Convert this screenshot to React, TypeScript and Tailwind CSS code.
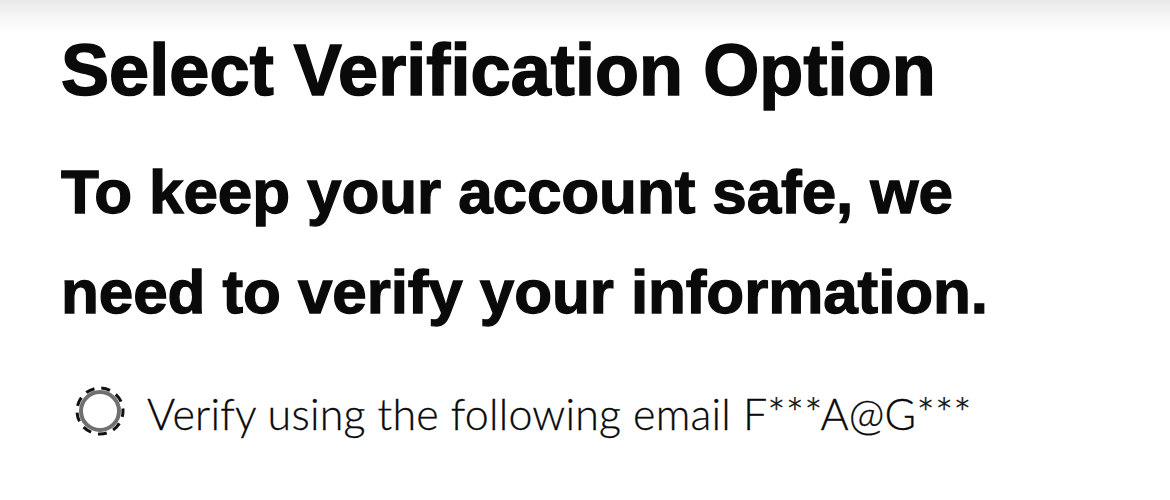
import React from "react";

function RadioMark() {
  return (
    <svg width="50" height="50" viewBox="0 0 50 50" className="shrink-0" aria-hidden>
      <circle cx="25" cy="25" r="19" fill="none" stroke="#707070" strokeWidth="4" />
      <circle
        cx="25"
        cy="25"
        r="23"
        fill="none"
        stroke="#111"
        strokeWidth="3"
        strokeDasharray="9 7"
        strokeDashoffset="3"
      />
    </svg>
  );
}

export default function App() {
  return (
    <div className="relative h-[500px] w-[1170px] overflow-hidden bg-white text-[#0a0a0a]">
      <div className="absolute inset-x-0 top-0 h-[34px] bg-gradient-to-b from-[#e9e9e9] via-[#f6f6f6] to-white" />
      <div className="relative flex flex-col pl-[61px] pt-[34px]">
        <h1 className="font-['Liberation_Sans',Arial,sans-serif] text-[72px] font-bold leading-[72px] tracking-[0.1px] [-webkit-text-stroke:1.6px_#0a0a0a]">
          Select Verification Option
        </h1>
        <h2 className="mt-[36px] font-['Liberation_Sans',Arial,sans-serif] text-[62px] font-bold leading-[100px] tracking-[-0.1px] [-webkit-text-stroke:1.3px_#0a0a0a]">
          To keep your account safe, we
          <br />
          need to verify your information.
        </h2>
        <label className="ml-[14px] mt-[44px] flex items-center gap-[22px]">
          <RadioMark />
          <span className="mt-[5px] font-['Lato',sans-serif] text-[43px] font-light leading-[43px] tracking-[0.2px] [-webkit-text-stroke:0.3px_#0a0a0a]">
            Verify using the following email F***A@G***
          </span>
        </label>
      </div>
    </div>
  );
}
